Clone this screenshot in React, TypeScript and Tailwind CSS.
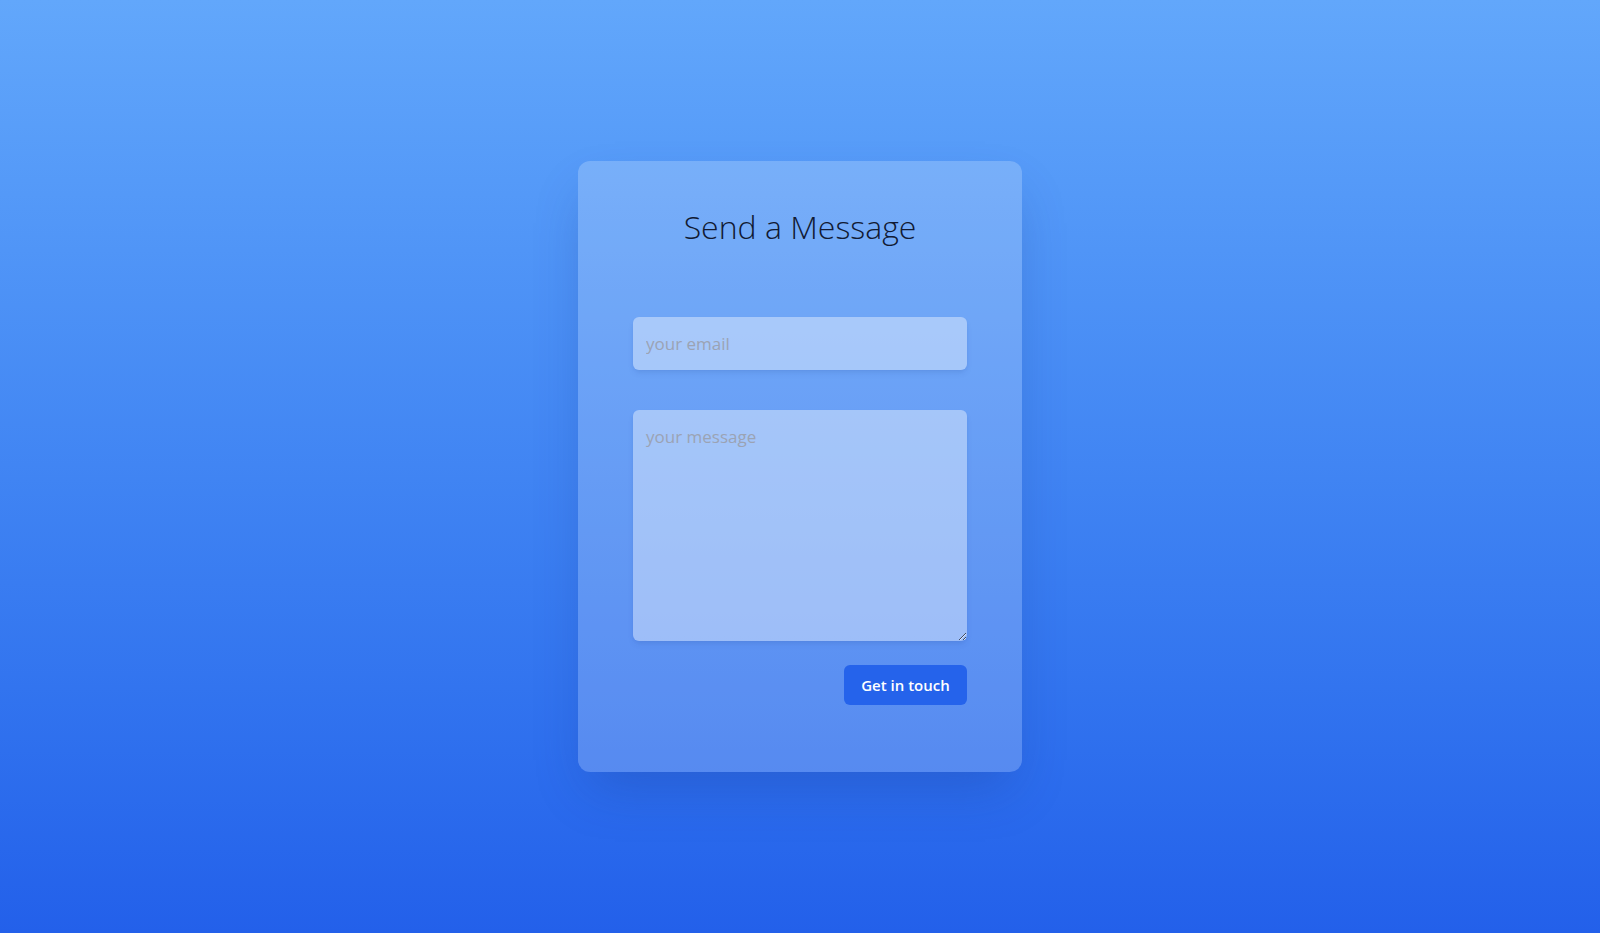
export default function App() {
  return (
    <div
      className="flex h-screen w-full items-center justify-center bg-gradient-to-b from-[#62a7fb] to-[#2360ea]"
      style={{ fontFamily: '"Open Sans", "Noto Sans", sans-serif' }}
    >
      <div className="flex w-[444px] flex-col items-center rounded-xl bg-white/20 pt-[46px] pb-[67px] shadow-2xl shadow-blue-900/30">
        <h1 className="text-[32px] font-light leading-10 text-[#111a33]">Send a Message</h1>
        <form className="mt-[70px] flex w-[334px] flex-col" onSubmit={(e) => e.preventDefault()}>
          <input
            type="email"
            placeholder="your email"
            className="h-[53px] w-full rounded-md bg-white/40 px-[13px] text-[17px] text-gray-700 shadow-md shadow-blue-900/10 outline-none placeholder:text-[#9ba3b4]"
          />
          <textarea
            placeholder="your message"
            className="mt-10 h-[231px] w-full rounded-md bg-white/40 px-[13px] py-[14px] text-[17px] text-gray-700 shadow-md shadow-blue-900/10 outline-none placeholder:text-[#9ba3b4]"
          />
          <div className="mt-6 flex justify-end">
            <button
              type="submit"
              className="h-10 w-[123px] rounded-md bg-[#2563eb] text-[15px] font-semibold text-white"
            >
              Get in touch
            </button>
          </div>
        </form>
      </div>
    </div>
  );
}
